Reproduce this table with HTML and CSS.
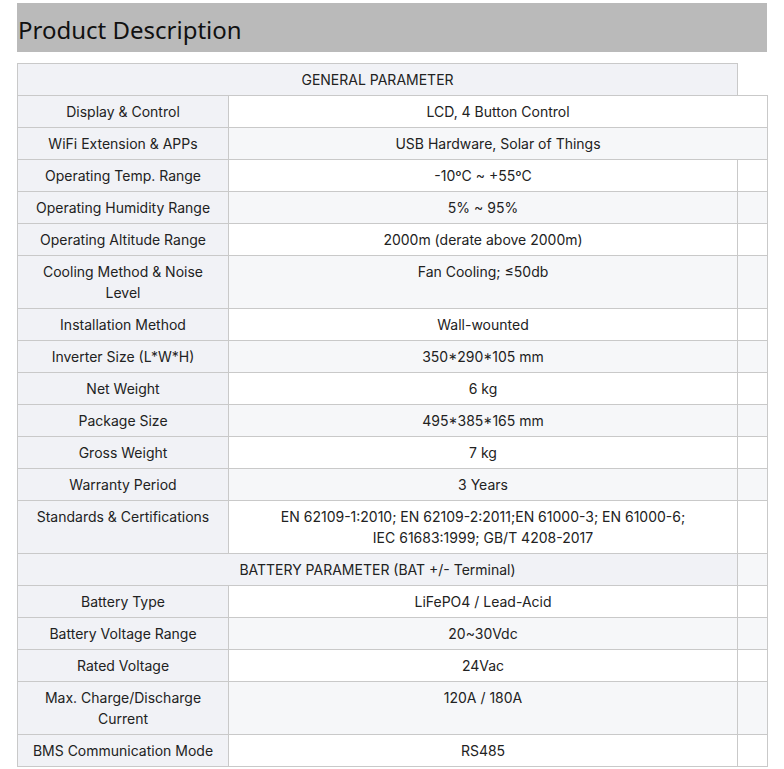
FILE: index.html
```html
<!DOCTYPE html>
<html>
<head>
<meta charset="utf-8">
<link rel="stylesheet" href="styles.css">
</head>
<body>
<div class="page">
  <h2 class="banner">Product Description</h2>
  <table class="spec">
    <colgroup><col class="c1"><col class="c2"><col class="c3"></colgroup>
    <tbody>
      <tr class="odd"><td class="head" colspan="2">GENERAL PARAMETER</td></tr>
      <tr class="even"><td class="lab">Display &amp; Control</td><td colspan="2">LCD, 4 Button Control</td></tr>
      <tr class="odd"><td class="lab">WiFi Extension &amp; APPs</td><td colspan="2">USB Hardware, Solar of Things</td></tr>
      <tr class="even"><td class="lab">Operating Temp. Range</td><td>-10ºC ~ +55ºC</td><td></td></tr>
      <tr class="odd"><td class="lab">Operating Humidity Range</td><td>5% ~ 95%</td><td></td></tr>
      <tr class="even"><td class="lab">Operating Altitude Range</td><td>2000m (derate above 2000m)</td><td></td></tr>
      <tr class="odd"><td class="lab">Cooling Method &amp; Noise Level</td><td class="top">Fan Cooling; ≤50db</td><td></td></tr>
      <tr class="even"><td class="lab">Installation Method</td><td>Wall-wounted</td><td></td></tr>
      <tr class="odd"><td class="lab">Inverter Size (L*W*H)</td><td>350*290*105 mm</td><td></td></tr>
      <tr class="even"><td class="lab">Net Weight</td><td>6 kg</td><td></td></tr>
      <tr class="odd"><td class="lab">Package Size</td><td>495*385*165 mm</td><td></td></tr>
      <tr class="even"><td class="lab">Gross Weight</td><td>7 kg</td><td></td></tr>
      <tr class="odd"><td class="lab">Warranty Period</td><td>3 Years</td><td></td></tr>
      <tr class="even"><td class="lab top">Standards &amp; Certifications</td><td>EN 62109-1:2010; EN 62109-2:2011;EN 61000-3; EN 61000-6;<br>IEC 61683:1999; GB/T 4208-2017</td><td></td></tr>
      <tr class="odd"><td class="head" colspan="2">BATTERY PARAMETER (BAT +/- Terminal)</td><td></td></tr>
      <tr class="even"><td class="lab">Battery Type</td><td>LiFePO4 / Lead-Acid</td><td></td></tr>
      <tr class="odd"><td class="lab">Battery Voltage Range</td><td>20~30Vdc</td><td></td></tr>
      <tr class="even"><td class="lab">Rated Voltage</td><td>24Vac</td><td></td></tr>
      <tr class="odd"><td class="lab">Max. Charge/Discharge Current</td><td class="top">120A / 180A</td><td></td></tr>
      <tr class="even"><td class="lab">BMS Communication Mode</td><td>RS485</td><td></td></tr>
    </tbody>
  </table>
</div>
</body>
</html>
```
FILE: styles.css
```css
html, body {
  margin: 0;
  padding: 0;
  background: #ffffff;
}
.page {
  padding: 3px 17px 0 17px;
  width: 750px;
}
.banner {
  margin: 0;
  height: 49px;
  background: #bababa;
  font-family: "Noto Sans", "Open Sans", sans-serif;
  font-weight: 400;
  font-size: 24px;
  line-height: 54px;
  color: #111;
  padding-left: 1px;
}
.spec {
  margin-top: 11px;
  border-collapse: collapse;
  table-layout: fixed;
  width: 750px;
  font-family: Inter, "Noto Sans", sans-serif;
  font-size: 14px;
  line-height: 21px;
  color: #222;
}
.c1 { width: 211px; }
.c2 { width: 509px; }
.c3 { width: 30px; }
.spec td {
  border: 1px solid #c9c9c9;
  padding: 5px 10px;
  text-align: center;
  vertical-align: middle;
  height: 21px;
}
.spec tr.odd td { background: #f6f7f9; }
.spec tr.even td { background: #ffffff; }
.spec tr td.lab { background: #f1f2f6; }
.spec tr td.head { background: #f1f2f6; }
.spec td.top { vertical-align: top; }
```
